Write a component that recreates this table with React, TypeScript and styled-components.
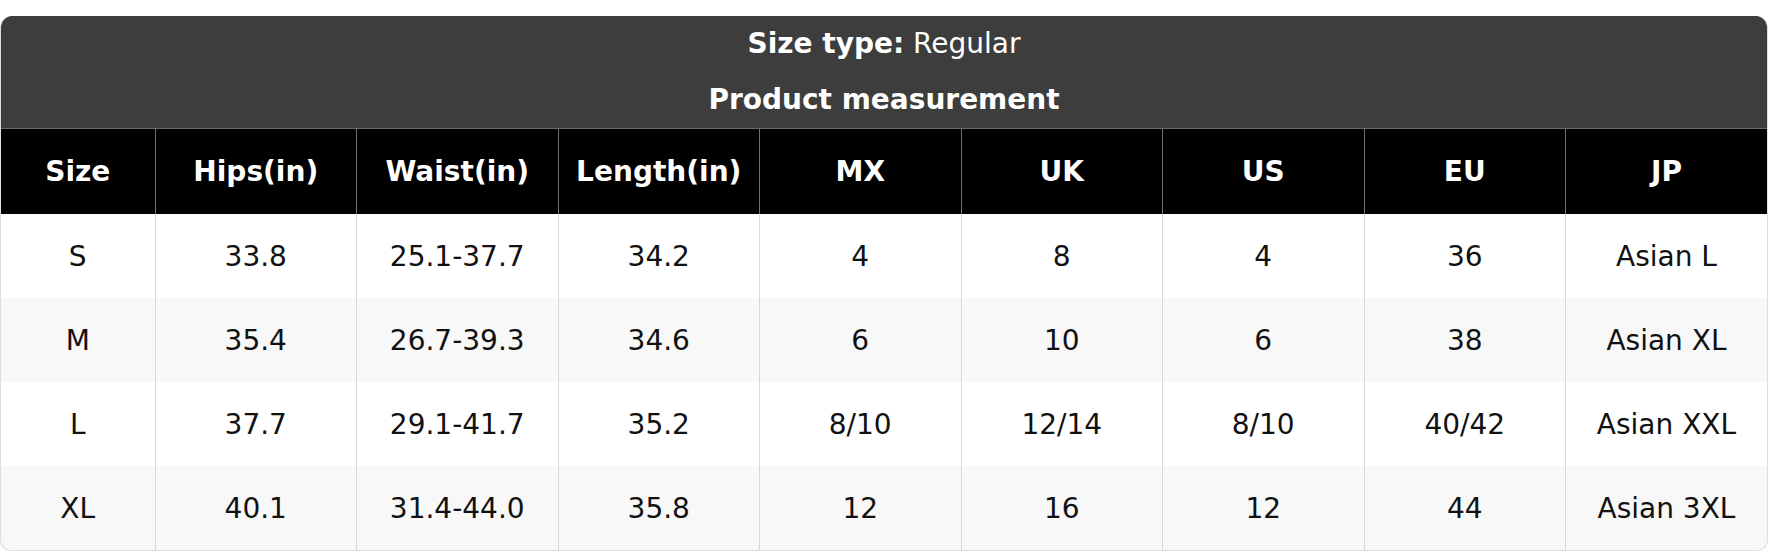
import React from "react";
import styled, { createGlobalStyle } from "styled-components";

const GlobalStyle = createGlobalStyle`
  html, body {
    margin: 0;
    padding: 0;
    background: #ffffff;
  }
  body {
    font-family: "DejaVu Sans", Verdana, sans-serif;
  }
`;

const Page = styled.div`
  padding-top: 16px;
  width: 1770px;
`;

const Card = styled.div`
  width: 1768px;
  box-sizing: border-box;
  border: 1px solid #dddddd;
  border-top: none;
  border-radius: 12px;
  overflow: hidden;
  background: #ffffff;
  box-shadow: 0 1px 2px rgba(0, 0, 0, 0.06);
`;

const Header = styled.div`
  background: #3d3d3d;
  color: #ffffff;
  display: flex;
  flex-direction: column;
`;

const HeaderLine = styled.div<{ $bold?: boolean; $h: number }>`
  height: ${(p) => p.$h}px;
  display: flex;
  align-items: center;
  justify-content: center;
  font-size: 28px;
  font-weight: ${(p) => (p.$bold ? 700 : 400)};
  white-space: pre;
`;

const Strong = styled.strong`
  font-weight: 700;
`;

const Table = styled.table`
  width: 100%;
  border-collapse: collapse;
  table-layout: fixed;
  font-size: 28px;
`;

const HeadCell = styled.th`
  background: #000000;
  color: #ffffff;
  font-weight: 700;
  height: 85px;
  padding: 0;
  text-align: center;
  vertical-align: middle;
  border-top: 1px solid #6a6a6a;
  border-left: 1px solid #707070;
  &:first-child {
    border-left: none;
  }
`;

const BodyRow = styled.tr<{ $alt: boolean }>`
  background: ${(p) => (p.$alt ? "#f8f8f8" : "#ffffff")};
`;

const Cell = styled.td`
  height: 84px;
  padding: 0;
  text-align: center;
  vertical-align: middle;
  color: #111111;
  border-left: 1px solid #d8d8d8;
  &:first-child {
    border-left: none;
  }
`;

const headers = ["Size", "Hips(in)", "Waist(in)", "Length(in)", "MX", "UK", "US", "EU", "JP"];

const rows = [
  ["S", "33.8", "25.1-37.7", "34.2", "4", "8", "4", "36", "Asian L"],
  ["M", "35.4", "26.7-39.3", "34.6", "6", "10", "6", "38", "Asian XL"],
  ["L", "37.7", "29.1-41.7", "35.2", "8/10", "12/14", "8/10", "40/42", "Asian XXL"],
  ["XL", "40.1", "31.4-44.0", "35.8", "12", "16", "12", "44", "Asian 3XL"],
];

export default function App() {
  return (
    <>
      <GlobalStyle />
      <Page>
        <Card>
          <Header>
            <HeaderLine $h={54}>
              <Strong>Size type:</Strong> Regular
            </HeaderLine>
            <HeaderLine $h={58} $bold>
              Product measurement
            </HeaderLine>
          </Header>
          <Table>
            <colgroup>
              <col style={{ width: 154 }} />
              {headers.slice(1).map((h) => (
                <col key={h} />
              ))}
            </colgroup>
            <thead>
              <tr>
                {headers.map((h) => (
                  <HeadCell key={h}>{h}</HeadCell>
                ))}
              </tr>
            </thead>
            <tbody>
              {rows.map((r, i) => (
                <BodyRow key={r[0]} $alt={i % 2 === 1}>
                  {r.map((c, j) => (
                    <Cell key={j}>{c}</Cell>
                  ))}
                </BodyRow>
              ))}
            </tbody>
          </Table>
        </Card>
      </Page>
    </>
  );
}
